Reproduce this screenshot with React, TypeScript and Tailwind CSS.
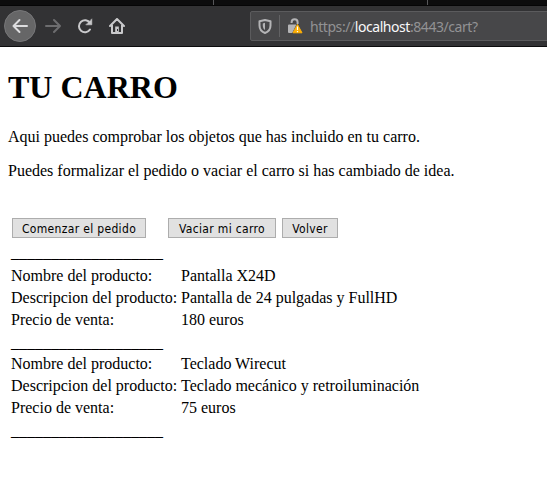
import type { ReactNode } from 'react';

const products = [
  { name: 'Pantalla X24D', description: 'Pantalla de 24 pulgadas y FullHD', price: '180 euros' },
  { name: 'Teclado Wirecut', description: 'Teclado mecánico y retroiluminación', price: '75 euros' },
];

function Button({ className, children }: { className: string; children: ReactNode }) {
  return (
    <button
      className={`flex h-5 items-center justify-center whitespace-nowrap border border-[#adadad] bg-[#e1e1e1] pt-px font-['DejaVu_Sans_Condensed','DejaVu_Sans',sans-serif] text-[12px] leading-[18px] tracking-[0.33px] text-black ${className}`}
    >
      {children}
    </button>
  );
}

function Rule({ className }: { className: string }) {
  return <div className={className}>___________________</div>;
}

function Row({ label, value }: { label: string; value: string }) {
  return (
    <div className="flex h-[22px] whitespace-nowrap leading-[22px]">
      <div className="w-[170px] shrink-0">{label}</div>
      <div>{value}</div>
    </div>
  );
}

function BrowserBar() {
  return (
    <header className="h-[47px] bg-[#323234]">
      <div className="flex h-[6px] border-b border-[#050506] bg-[#0c0c0d]">
        <div className="w-[214px] shrink-0 border-r border-[#57575a]" />
        <div className="w-[214px] shrink-0 border-r border-[#57575a]" />
      </div>
      <div className="flex h-[41px] items-center border-b border-[#0c0c0d]">
        <div className="ml-1 flex h-8 w-8 shrink-0 items-center justify-center rounded-full border border-[#777779] bg-[#666667]">
          <svg width="16" height="16" viewBox="0 0 16 16" fill="none" stroke="#dddddf" strokeWidth="2" strokeLinecap="round" strokeLinejoin="round">
            <path d="M15 8H1.5M7.5 2 1.5 8l6 6" />
          </svg>
        </div>
        <svg className="ml-[9px] shrink-0" width="16" height="16" viewBox="0 0 16 16" fill="none" stroke="#6d6d6f" strokeWidth="2" strokeLinecap="round" strokeLinejoin="round">
          <path d="M1 8h14M9 2l6 6-6 6" />
        </svg>
        <svg className="ml-4 shrink-0" width="16" height="16" viewBox="0 0 16 16" fill="none" stroke="#c9c9cb" strokeWidth="2" strokeLinecap="round" strokeLinejoin="round">
          <path d="M13 11.5A6 6 0 1 1 13 5" />
          <path d="M14.8 1.2v5.6H9.2z" fill="#c9c9cb" stroke="#c9c9cb" strokeWidth=".6" />
        </svg>
        <svg className="ml-4 shrink-0" width="16" height="16" viewBox="0 0 16 16" fill="none" stroke="#c9c9cb" strokeWidth="2" strokeLinecap="round" strokeLinejoin="round">
          <path d="M1 8l7-7 7 7M3 7v8h10V7" />
          <path d="M8 8.5V15" strokeWidth="3.6" strokeLinecap="butt" />
          <path d="M8.5 11v2" stroke="#323234" strokeWidth="1" strokeLinecap="butt" />
        </svg>
        <div className="ml-[125px] flex h-[30px] w-[300px] shrink-0 items-center rounded-[2px] border border-[#5b5b5d] bg-[#474749]">
          <svg className="ml-[7px] shrink-0" width="14" height="15" viewBox="0 0 14 15">
            <path d="M7 1 1.5 2.3v4.2C1.5 10 3.8 12.8 7 14c3.2-1.2 5.5-4 5.5-7.5V2.3z" fill="none" stroke="#b4b4b6" strokeWidth="2" strokeLinejoin="round" />
            <path d="M7 3.8 4.8 4.5v2c0 2 .8 3.5 2.2 4.5z" fill="#b4b4b6" />
          </svg>
          <div className="ml-[7px] h-[22px] w-px bg-[#626264]" />
          <svg className="ml-2 shrink-0" width="15" height="16" viewBox="0 0 15 16">
            <path d="M3.6 5V4.2a3 3 0 0 1 6 0V6" fill="none" stroke="#b4b4b6" strokeWidth="2" />
            <path d="M1 6.5h7.4L4.2 15H1a1 1 0 0 1-1-1V7.5a1 1 0 0 1 1-1z" fill="#b4b4b6" />
            <path d="M9.5 6.5 14 14.8H5z" fill="#ffb005" stroke="#ffb005" strokeLinejoin="round" />
            <path d="M9.5 8.5v3.5M9.5 13v1.3" stroke="#fff" strokeWidth="1.2" />
          </svg>
          <div className="ml-[7px] whitespace-nowrap pt-px font-['Noto_Sans',sans-serif] text-[14px] leading-5 tracking-[-0.44px] text-[#929294]">
            https://<span className="text-[#f9f9fa]">localhost</span>:8443/cart?
          </div>
        </div>
      </div>
    </header>
  );
}

export default function App() {
  return (
    <div className="h-[498px] w-[547px] overflow-hidden bg-white font-['Liberation_Serif',serif] text-[16px] text-black">
      <BrowserBar />
      <main className="px-2 pt-[22px]">
        <h1 className="text-[32px] font-bold leading-[37px]">TU CARRO</h1>
        <p className="mt-[22px] leading-[18px]">Aqui puedes comprobar los objetos que has incluido en tu carro.</p>
        <p className="mt-4 leading-[18px]">Puedes formalizar el pedido o vaciar el carro si has cambiado de idea.</p>
        <div className="ml-1 mt-[38px] flex">
          <Button className="w-[134px]">Comenzar el pedido</Button>
          <Button className="ml-[22px] w-[108px]">Vaciar mi carro</Button>
          <Button className="ml-[6px] w-[56px]">Volver</Button>
        </div>
        <section className="ml-[3px] mt-[5px]">
          <Rule className="h-[22px] leading-[20px]" />
          {products.map((p) => (
            <div key={p.name}>
              <Row label="Nombre del producto:" value={p.name} />
              <Row label="Descripcion del producto:" value={p.description} />
              <Row label="Precio de venta:" value={p.price} />
              <Rule className="h-[22px] leading-[24px]" />
            </div>
          ))}
        </section>
      </main>
    </div>
  );
}
